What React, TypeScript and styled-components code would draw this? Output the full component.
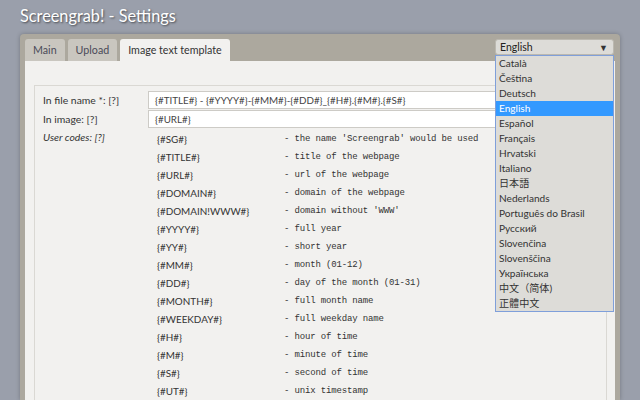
import React from 'react';
import styled, { createGlobalStyle } from 'styled-components';

const GlobalStyle = createGlobalStyle`
	html, body {
		margin: 0;
		padding: 0;
		background: #9a9fab;
		font-family: Lato, 'Open Sans', sans-serif;
		color: #333;
	}
`;

const Page = styled.div`
	height: 400px;
	overflow: hidden;
	padding: 0 20px;
	display: flex;
	flex-direction: column;
`;

const Title = styled.h1`
	margin: 0;
	height: 34px;
	line-height: 32px;
	font-size: 16.3px;
	font-weight: 400;
	color: #fff;
	text-shadow: 1px 1px 2px rgba(0, 0, 0, 0.55);
`;

const Frame = styled.div`
	flex: 1;
	display: flex;
	flex-direction: column;
	background: #aca89e;
	border-radius: 4px 4px 0 0;
	padding: 5px 5px 0 5px;
	box-shadow: 0 0 4px rgba(0, 0, 0, 0.25);
`;

const TabBar = styled.div`
	position: relative;
	display: flex;
	align-items: flex-start;
	gap: 3px;
	height: 22px;
`;

const Tab = styled.div<{ $active?: boolean }>`
	height: 22px;
	line-height: 22px;
	padding: 0 8px;
	font-size: 10.7px;
	border-radius: 3px 3px 0 0;
	color: ${p => (p.$active ? '#333' : '#4a4a58')};
	background: ${p => (p.$active ? '#f2f1ef' : '#c9c6bf')};
`;

const LangSelect = styled.div`
	margin-left: auto;
	margin-right: 1px;
	width: 119px;
	height: 16px;
	box-sizing: border-box;
	border: 1px solid #bbb8b0;
	border-radius: 3px;
	background: #dddcd8;
	display: flex;
	align-items: center;
	justify-content: space-between;
	padding: 0 5px 0 4px;
	font-size: 10.5px;
	color: #222;
`;

const Arrow = styled.span`
	font-size: 9px;
	color: #333;
`;

const LangList = styled.ul`
	position: absolute;
	top: 16px;
	right: 1px;
	width: 119px;
	box-sizing: border-box;
	margin: 0;
	padding: 0;
	list-style: none;
	background: #dddcd8;
	border: 1px solid #7f9fda;
	z-index: 5;
`;

const LangItem = styled.li<{ $selected?: boolean }>`
	height: 15px;
	line-height: 15px;
	padding-left: 3px;
	font-size: 10.1px;
	font-family: Lato, 'Noto Sans CJK JP', sans-serif;
	color: ${p => (p.$selected ? '#fff' : '#333')};
	background: ${p => (p.$selected ? '#3399ff' : 'transparent')};
`;

const Panel = styled.div`
	flex: 1;
	background: #f2f1ef;
	padding: 24px 8px 0 9px;
	display: flex;
	flex-direction: column;
`;

const Box = styled.div`
	flex: 1;
	border: 1px solid #dad8d3;
	border-bottom: none;
	padding: 5px 8px 0 8px;
`;

const FieldRow = styled.div`
	display: grid;
	grid-template-columns: 105px 1fr;
	align-items: center;
	margin-bottom: 1px;
`;

const Label = styled.div<{ $italic?: boolean }>`
	font-size: 10.4px;
	font-style: ${p => (p.$italic ? 'italic' : 'normal')};
	color: #333;
`;

const TextInput = styled.div`
	height: 18px;
	box-sizing: border-box;
	border: 1px solid #cdcbc6;
	background: #fff;
	padding: 0 6px;
	line-height: 16px;
	font-size: 9.8px;
	color: #444;
	white-space: nowrap;
	overflow: hidden;
`;

const CodesRow = styled.div`
	display: grid;
	grid-template-columns: 114px 1fr;
	margin-top: 2px;
`;

const CodesLabel = styled(Label)`
	padding-top: 1px;
`;

const CodesTable = styled.div`
	display: grid;
	grid-template-columns: 127px 1fr;
	grid-auto-rows: 18px;
	align-items: center;
`;

const Code = styled.div`
	font-size: 9.9px;
	color: #333;
`;

const Desc = styled.div`
	font-family: 'Liberation Mono', 'DejaVu Sans Mono', monospace;
	font-size: 9px;
	letter-spacing: -0.15px;
	color: #333;
	white-space: pre;
`;

const languages = [
	'Català',
	'Čeština',
	'Deutsch',
	'English',
	'Español',
	'Français',
	'Hrvatski',
	'Italiano',
	'日本語',
	'Nederlands',
	'Português do Brasil',
	'Русский',
	'Slovenčina',
	'Slovenščina',
	'Українська',
	'中文（简体)',
	'正體中文'
];

const codes: [string, string][] = [
	['{#SG#}', "- the name 'Screengrab' would be used"],
	['{#TITLE#}', '- title of the webpage'],
	['{#URL#}', '- url of the webpage'],
	['{#DOMAIN#}', '- domain of the webpage'],
	['{#DOMAIN!WWW#}', "- domain without 'WWW'"],
	['{#YYYY#}', '- full year'],
	['{#YY#}', '- short year'],
	['{#MM#}', '- month (01-12)'],
	['{#DD#}', '- day of the month (01-31)'],
	['{#MONTH#}', '- full month name'],
	['{#WEEKDAY#}', '- full weekday name'],
	['{#H#}', '- hour of time'],
	['{#M#}', '- minute of time'],
	['{#S#}', '- second of time'],
	['{#UT#}', '- unix timestamp']
];

const App = () => (
	<>
		<GlobalStyle />
		<Page>
			<Title>Screengrab! - Settings</Title>
			<Frame>
				<TabBar>
					<Tab>Main</Tab>
					<Tab>Upload</Tab>
					<Tab $active>Image text template</Tab>
					<LangSelect>
						English
						<Arrow>▼</Arrow>
					</LangSelect>
					<LangList>
						{languages.map(lang => (
							<LangItem key={lang} $selected={lang === 'English'}>{lang}</LangItem>
						))}
					</LangList>
				</TabBar>
				<Panel>
					<Box>
						<FieldRow>
							<Label>In file name *: [?]</Label>
							<TextInput>{'{#TITLE#} - {#YYYY#}-{#MM#}-{#DD#}_{#H#}.{#M#}.{#S#}'}</TextInput>
						</FieldRow>
						<FieldRow>
							<Label>In image: [?]</Label>
							<TextInput>{'{#URL#}'}</TextInput>
						</FieldRow>
						<CodesRow>
							<CodesLabel $italic>User codes: [?]</CodesLabel>
							<CodesTable>
								{codes.map(([code, desc]) => (
									<React.Fragment key={code}>
										<Code>{code}</Code>
										<Desc>{desc}</Desc>
									</React.Fragment>
								))}
							</CodesTable>
						</CodesRow>
					</Box>
				</Panel>
			</Frame>
		</Page>
	</>
);

export default App;
